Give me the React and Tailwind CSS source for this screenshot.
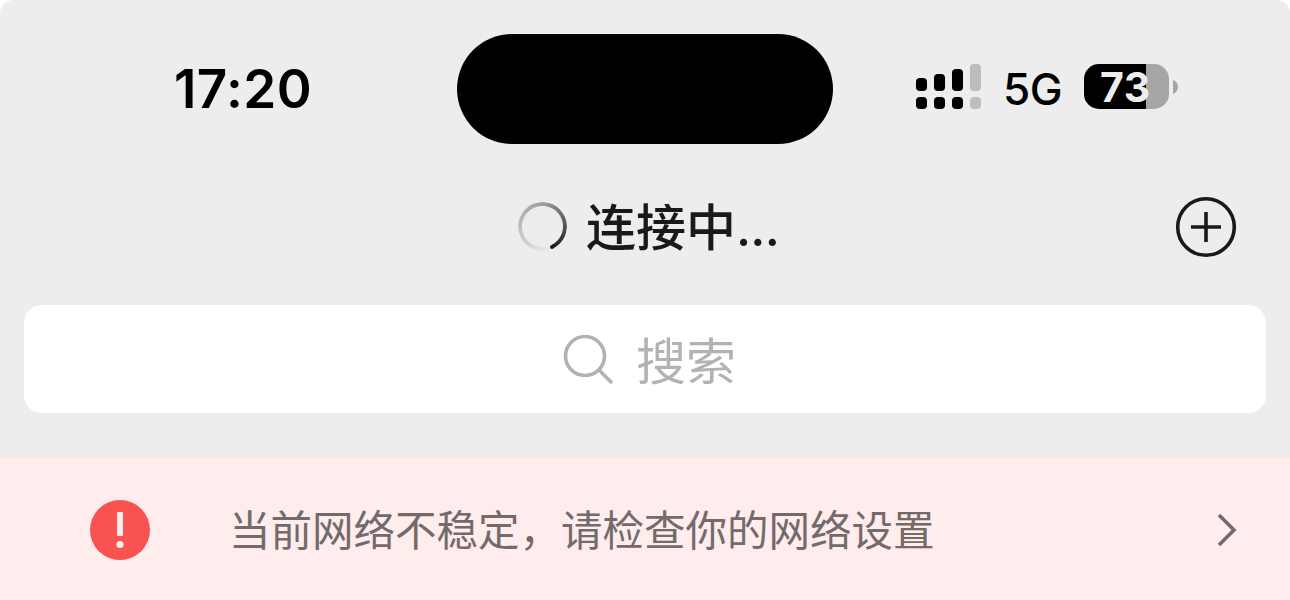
import React from "react";

const signalBars = [
  { id: 1, height: "h-[13px]", color: "bg-black" },
  { id: 2, height: "h-[17px]", color: "bg-black" },
  { id: 3, height: "h-[22px]", color: "bg-black" },
  { id: 4, height: "h-[27px]", color: "bg-[#bdbdbd]" },
];

const Signal = () => (
  <div className="flex items-end gap-[7px] h-[45px]">
    {signalBars.map((bar) => (
      <div key={bar.id} className="flex flex-col gap-[6px] w-[11px]">
        <span className={`rounded-[4px] ${bar.height} ${bar.color}`}></span>
        <span className={`rounded-[4px] h-[12px] ${bar.color}`}></span>
      </div>
    ))}
  </div>
);

const Battery = () => (
  <div className="flex items-center gap-1">
    <div className="w-[85px] h-[45px] pl-[16px] rounded-[15px] bg-[linear-gradient(90deg,#000_62px,#a6a6a6_62px)] text-[41px] leading-[46px] tracking-[0.5px] font-bold text-[#ededed]">
      73
    </div>
    <svg width="5" height="14" viewBox="0 0 5 14">
      <path d="M0 0C3 1 5 4 5 7s-2 6-5 7z" fill="#a6a6a6" />
    </svg>
  </div>
);

const StatusBar = () => (
  <div className="flex h-[178px] pt-[34px] font-['Inter',sans-serif] text-black">
    <div className="w-[457px] pl-[174px] pt-[23px] text-[53px] leading-[64px] tracking-[0.4px] font-semibold">
      17:20
    </div>
    <div className="w-[376px] h-[110px] rounded-[55px] bg-black"></div>
    <div className="flex pl-[83px] pt-[30px] h-[75px]">
      <Signal />
      <span className="w-[81px] ml-[22px] mt-[3px] text-[44px] leading-[45px] tracking-[-0.5px] font-[450]">
        5G
      </span>
      <Battery />
    </div>
  </div>
);

const Spinner = () => (
  <div className="relative w-[49px] h-[49px] -mt-[1px]">
    <div className="w-full h-full rounded-full bg-[conic-gradient(from_154deg,#1a1a1a00,#1a1a1a66_60%,#1a1a1a)] [mask-image:radial-gradient(circle,transparent_20px,black_21px)]"></div>
    <span className="absolute left-[32px] top-[43px] w-[4px] h-[4px] rounded-full bg-[#1a1a1a]"></span>
  </div>
);

const TitleBar = () => (
  <div className="relative flex items-center h-[97px] pl-[518px] text-[#191919]">
    <Spinner />
    <h1 className="ml-[19px] -mt-[1px] font-['Noto_Sans_CJK_SC',sans-serif] text-[50px] leading-[60px] font-medium">
      连接中
      <span className="font-['Inter',sans-serif] tracking-[-0.8px]">...</span>
    </h1>
    <svg
      className="absolute right-[53px] top-[18px]"
      width="62"
      height="62"
      viewBox="0 0 62 62"
      fill="none"
      stroke="#191919"
      strokeWidth="3.6"
    >
      <circle cx="31" cy="31" r="28.3" />
      <path d="M31 16v30M16 31h30" />
    </svg>
  </div>
);

const SearchBox = () => (
  <div className="mx-6 mt-[30px] flex items-center h-[108px] pl-[538px] rounded-[18px] bg-white text-[#b2b2b2]">
    <svg width="54" height="54" viewBox="0 0 54 54" fill="none" stroke="#b2b2b2" strokeWidth="3.6">
      <circle cx="23" cy="24" r="19.5" />
      <path d="M37 38l13 13" />
    </svg>
    <span className="ml-[20px] -mt-[3px] font-['Noto_Sans_CJK_SC',sans-serif] text-[50px] leading-[60px]">
      搜索
    </span>
  </div>
);

const NetworkNotice = () => (
  <div className="mt-[45px] flex items-center h-[144px] pl-[90px] pr-[53px] bg-[#ffecec]">
    <svg width="60" height="60" viewBox="0 0 60 60">
      <circle cx="30" cy="30" r="30" fill="#fa5151" />
      <rect x="27" y="12" width="6" height="24" fill="#ffecec" />
      <circle cx="30" cy="44.5" r="3.6" fill="#ffecec" />
    </svg>
    <p className="ml-[79px] -mt-[5px] grow font-['Noto_Sans_CJK_SC',sans-serif] text-[41.5px] leading-[50px] text-[#736a6a]">
      当前网络不稳定，请检查你的网络设置
    </p>
    <svg width="22" height="34" viewBox="0 0 22 34" fill="none" stroke="#736a6a" strokeWidth="3.6">
      <path d="M4 2l15 15L4 32" />
    </svg>
  </div>
);

const App = () => {
  return (
    <div className="w-[1290px] h-[600px] bg-white overflow-hidden">
      <div className="h-full rounded-t-[14px] bg-[#ededed] overflow-hidden">
        <StatusBar />
        <TitleBar />
        <SearchBox />
        <NetworkNotice />
      </div>
    </div>
  );
};

export default App;
